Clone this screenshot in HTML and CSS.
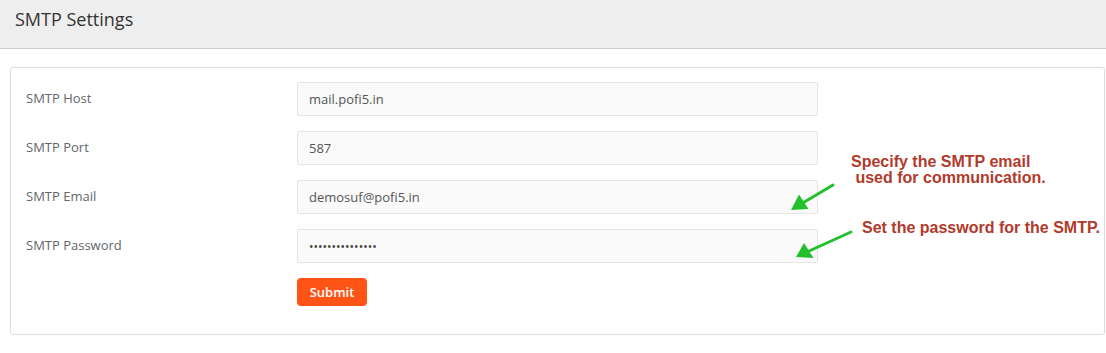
FILE: index.html
```
<!DOCTYPE html>
<html lang="en">
<head>
  <meta charset="UTF-8">
  <meta name="viewport" content="width=device-width, initial-scale=1.0">
  <title>SMTP Settings</title>
  <link rel="stylesheet" href="styles.css">
</head>
<body>
  <div class="page-header">
    <h1>SMTP Settings</h1>
  </div>

  <div class="card">
    <form class="smtp-form">
      <label for="smtpHost">SMTP Host</label>
      <input type="text" id="smtpHost" value="mail.pofi5.in">

      <label for="smtpPort">SMTP Port</label>
      <input type="text" id="smtpPort" value="587">

      <label for="smtpEmail">SMTP Email</label>
      <input type="text" id="smtpEmail" value="demosuf@pofi5.in">

      <label for="smtpPass">SMTP Password</label>
      <input type="password" id="smtpPass" value="secretpassword1">

      <span></span>
      <div><button type="button" class="btn-submit">Submit</button></div>
    </form>

    <!-- help notes drawn over the form -->
    <div class="note note-email">Specify the SMTP email<br>&nbsp;used for communication.</div>
    <div class="note note-pass">Set the password for the SMTP.</div>
    <svg class="arrows" viewBox="781 168 90 100" width="90" height="100">
      <line x1="833" y1="185" x2="801" y2="204" stroke="#22c02a" stroke-width="3" stroke-linecap="round"/>
      <polygon points="791,210 799,194.5 808.5,209" fill="#22c02a"/>
      <line x1="851" y1="232" x2="808" y2="251.5" stroke="#22c02a" stroke-width="3" stroke-linecap="round"/>
      <polygon points="796,257 804,243 813.5,258" fill="#22c02a"/>
    </svg>
  </div>
</body>
</html>
```
FILE: styles.css
```
body {
  margin: 0;
  background: #fff;
  font-family: "Open Sans", "Noto Sans", sans-serif;
  color: #333;
}
.page-header {
  background: #eeeeee;
  border-bottom: 1px solid #cfcfcf;
  height: 48px;
  padding: 0 15px;
}
.page-header h1 {
  margin: 0;
  padding-top: 7px;
  font-size: 18px;
  font-weight: 400;
  line-height: 24px;
  color: #333;
}
.card {
  position: relative;
  margin: 18px 1px 0 10px;
  border: 1px solid #dcdcdc;
  border-radius: 3px;
  padding: 14px 15px 28px;
}
.smtp-form {
  display: grid;
  grid-template-columns: 271px 521px;
  row-gap: 15px;
  align-items: center;
}
.smtp-form label {
  font-size: 13px;
  color: #62666b;
  margin-top: -2px;
}
.smtp-form input {
  box-sizing: border-box;
  height: 34px;
  width: 100%;
  border: 1px solid #e4e4e4;
  border-radius: 2px;
  background: #fafafa;
  padding: 0 11px;
  font-family: inherit;
  font-size: 13px;
  color: #555;
  outline: none;
}
.smtp-form input[type="password"] {
  font-size: 12px;
  color: #444;
}
.btn-submit {
  width: 70px;
  height: 28px;
  border: none;
  border-radius: 4px;
  background: #ff5416;
  color: #fff;
  font-family: inherit;
  font-size: 13px;
  font-weight: 600;
  padding: 0;
}
.note {
  position: absolute;
  font-family: "Liberation Sans", Arial, sans-serif;
  font-weight: 700;
  font-size: 16px;
  line-height: 16px;
  color: #b23a2b;
  white-space: nowrap;
}
.note-email {
  left: 840px;
  top: 86px;
}
.note-pass {
  left: 851px;
  top: 152px;
}
.arrows {
  position: absolute;
  left: 770px;
  top: 100px;
}
```
